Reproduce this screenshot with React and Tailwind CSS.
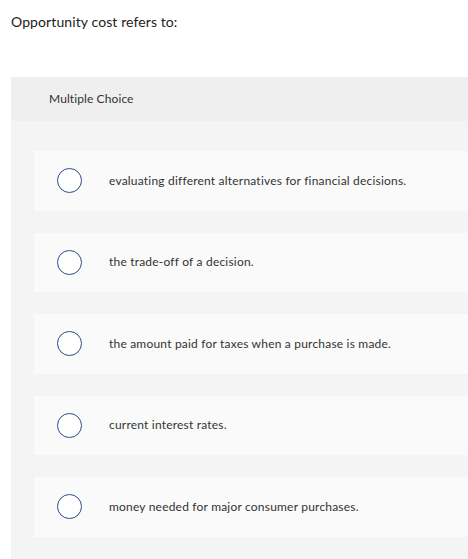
export default function App() {
  const options = [
    "evaluating different alternatives for financial decisions.",
    "the trade-off of a decision.",
    "the amount paid for taxes when a purchase is made.",
    "current interest rates.",
    "money needed for major consumer purchases.",
  ];

  return (
    <div className="w-[468px] h-[559px] overflow-hidden bg-white text-[#333] font-['Lato','Liberation_Sans',sans-serif]">
      <p className="pl-[11px] pt-[13px] text-[14px] leading-[18px] text-[#222] tracking-[0.1px]">
        Opportunity cost refers to:
      </p>
      <div className="ml-[11px] mt-[46px]">
        <div className="h-[44px] bg-[#efefef] pl-[38px] flex items-center text-[12px] tracking-[0.1px]">
          Multiple Choice
        </div>
        <div className="bg-[#f4f4f4] pl-[23px] pt-[30px] pb-[22px] flex flex-col gap-[22px]">
          {options.map((text) => (
            <div key={text} className="h-[59.5px] bg-[#fafafa] flex items-center">
              <span className="ml-[23px] w-[25px] h-[25px] rounded-full border border-[#2d4b8a] bg-white shrink-0" />
              <span className="ml-[27px] text-[12px] tracking-[0.2px]">{text}</span>
            </div>
          ))}
        </div>
      </div>
    </div>
  );
}
